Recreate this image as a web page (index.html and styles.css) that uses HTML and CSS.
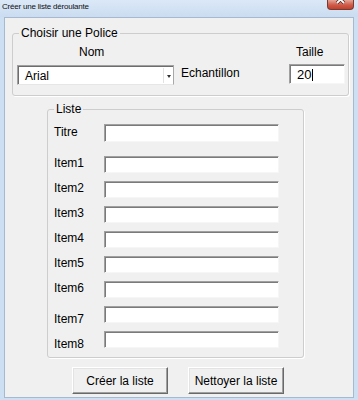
FILE: index.html
```html
<!DOCTYPE html>
<html lang="fr">

<head>
    <meta charset="UTF-8">
    <meta name="viewport" content="width=device-width, initial-scale=1.0">
    <title>Créer une liste déroulante</title>
    <link rel="stylesheet" href="styles.css">
</head>

<body>
    <div class="window">
        <div class="titlebar">
            <span class="title">Créer une liste déroulante</span>
            <div class="close">
                <svg width="25" height="10" viewBox="0 0 25 10">
                    <path d="M9 -4 L16 3 M16 -4 L9 3" stroke="#5a2620" stroke-width="3.4" />
                    <path d="M9 -4 L16 3 M16 -4 L9 3" stroke="#fff" stroke-width="1.8" />
                </svg>
            </div>
        </div>
        <div class="client">
            <fieldset class="group police">
                <legend>Choisir une Police</legend>
                <div class="police-grid">
                    <span class="lbl nom">Nom</span>
                    <span></span>
                    <span class="lbl taille">Taille</span>
                    <div class="combo">
                        <span class="combo-text">Arial</span>
                        <span class="combo-btn"><span class="arrow"></span></span>
                    </div>
                    <span class="lbl sample">Echantillon</span>
                    <div class="field size"><span>20</span><span class="caret"></span></div>
                </div>
            </fieldset>

            <fieldset class="group liste">
                <legend>Liste</legend>
                <div class="liste-grid">
                    <span class="lbl first">Titre</span>
                    <div class="field tall"></div>
                    <span class="lbl">Item1</span>
                    <div class="field"></div>
                    <span class="lbl">Item2</span>
                    <div class="field"></div>
                    <span class="lbl">Item3</span>
                    <div class="field"></div>
                    <span class="lbl">Item4</span>
                    <div class="field"></div>
                    <span class="lbl">Item5</span>
                    <div class="field"></div>
                    <span class="lbl">Item6</span>
                    <div class="field"></div>
                    <span class="lbl low">Item7</span>
                    <div class="field"></div>
                    <span class="lbl low">Item8</span>
                    <div class="field"></div>
                </div>
            </fieldset>

            <div class="buttons">
                <button class="btn">Créer la liste</button>
                <button class="btn">Nettoyer la liste</button>
            </div>
        </div>
    </div>
</body>

</html>
```

FILE: styles.css
```css
* {
    box-sizing: border-box;
}

body {
    margin: 0;
    padding: 0;
    font-family: "Liberation Sans", Arial, sans-serif;
    font-size: 12px;
    color: #000;
}

.window {
    width: 358px;
    height: 400px;
    display: flex;
    flex-direction: column;
    padding: 0 4px 2px 4px;
    background: #cddff3;
}

.titlebar {
    height: 17px;
    display: flex;
    justify-content: space-between;
    align-items: flex-start;
    margin: 0 -4px;
    padding: 0 4px 0 2px;
    background: linear-gradient(#dbe8f7, #cbdcf1);
}

.title {
    margin-top: 2px;
    font-size: 8px;
    line-height: 10px;
    letter-spacing: -0.2px;
    color: #111;
}

.close {
    width: 27px;
    height: 10px;
    border: 1px solid #7a3a30;
    border-top: none;
    border-radius: 0 0 4px 4px;
    background: linear-gradient(#e3a597, #cf5a49 55%, #c2402e);
    overflow: hidden;
}

.close svg {
    display: block;
}

.client {
    flex: 1;
    display: flex;
    flex-direction: column;
    align-items: flex-start;
    background: #f0f0f0;
    border: 1px solid #a6b9cf;
}

.group {
    margin: 0;
    padding: 0;
    min-width: 0;
    border: 1px solid #cdcdcd;
    border-radius: 3px;
    box-shadow: 1px 1px 0 #fff;
}

.group legend {
    margin-left: 6px;
    padding: 0 2px;
    font-size: 12px;
    line-height: 14px;
}

.lbl {
    line-height: 14px;
    white-space: nowrap;
}

/* Choisir une Police */
.police {
    width: 337px;
    margin: 8px 0 0 7px;
}

.police-grid {
    display: grid;
    grid-template-columns: 157px 101px 56px;
    column-gap: 7px;
    row-gap: 5px;
    align-items: start;
    padding: 5px 3px 10px 4px;
}

.nom {
    padding-left: 62px;
}

.taille {
    padding-left: 7px;
}

.sample {
    margin-top: 2px;
}

.combo {
    height: 20px;
    margin-top: 1px;
    display: flex;
    align-items: stretch;
    background: #fff;
    border-top: 1px solid #a0a0a0;
    border-left: 1px solid #a0a0a0;
    border-right: 1px solid #a8a8a8;
    border-bottom: 1px solid #e6e6e6;
    box-shadow: inset 1px 1px 0 #6d6d6d;
}

.combo-text {
    flex: 1;
    display: flex;
    align-items: center;
    padding: 1px 0 0 7px;
}

.combo-btn {
    width: 10px;
    margin: 2px 0 1px 0;
    display: flex;
    align-items: center;
    justify-content: center;
    border-left: 1px solid #e2e2e2;
}

.arrow {
    width: 0;
    height: 0;
    margin-top: 1px;
    border-left: 2px solid transparent;
    border-right: 2px solid transparent;
    border-top: 3px solid #303030;
}

.field {
    width: 175px;
    height: 17px;
    background: #fff;
    border-top: 1px solid #a0a0a0;
    border-left: 1px solid #a0a0a0;
    border-right: 1px solid #f6f6f6;
    border-bottom: 1px solid #f6f6f6;
    box-shadow: inset 1px 1px 0 #7a7a7a;
}

.field.tall {
    height: 18px;
}

.size {
    width: 56px;
    height: 20px;
    display: flex;
    align-items: center;
    padding: 1px 0 0 7px;
    font-size: 13px;
}

.caret {
    width: 1px;
    height: 12px;
    margin-left: 1px;
    background: #000;
}

/* Liste */
.liste {
    width: 257px;
    margin: 6px 0 0 42px;
}

.liste-grid {
    display: grid;
    grid-template-columns: 50px 175px;
    grid-template-rows: 24px;
    grid-auto-rows: 17px;
    row-gap: 8px;
    align-items: start;
    padding: 8px 0 9px 6px;
}

.lbl.first {
    margin-top: 1px;
}

.lbl.low {
    margin-top: 6px;
}

/* Boutons */
.buttons {
    display: flex;
    gap: 20px;
    margin-top: 9px;
    padding-left: 67px;
}

.btn {
    width: 96px;
    height: 27px;
    padding: 0;
    font-family: "Liberation Sans", Arial, sans-serif;
    font-size: 12px;
    color: #000;
    background: #f0f0f0;
    border: 1px solid;
    border-color: #fff #696969 #696969 #fff;
    border-radius: 0;
    box-shadow: inset -1px -1px 0 #a0a0a0, inset 1px 1px 0 #e3e3e3;
}
```
